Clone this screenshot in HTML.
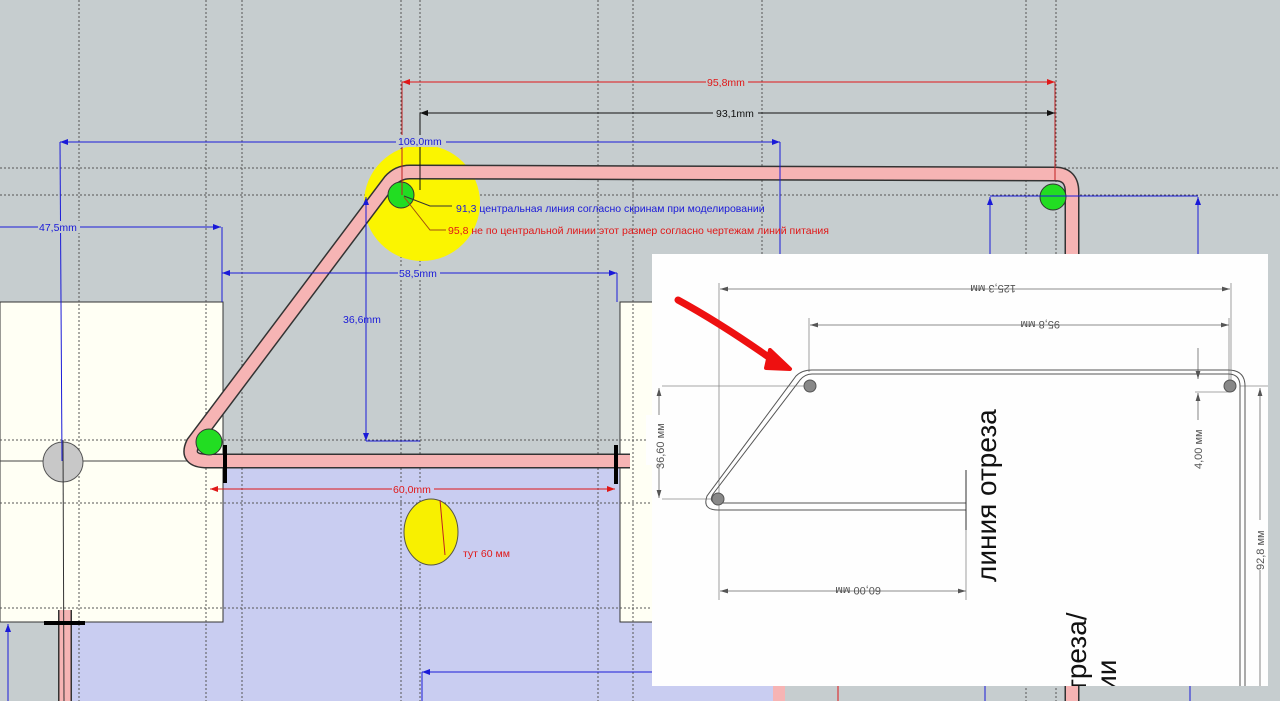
<!DOCTYPE html>
<html><head><meta charset="utf-8"><style>
html,body{margin:0;padding:0;width:1280px;height:701px;overflow:hidden;background:#c6cdcf}
svg{display:block}
text{font-family:"Liberation Sans","DejaVu Sans",sans-serif}
</style></head><body>
<svg width="1280" height="701" viewBox="0 0 1280 701" xmlns="http://www.w3.org/2000/svg">
<defs>
<marker id="ab" markerWidth="8" markerHeight="6" refX="8" refY="3" orient="auto-start-reverse"><path d="M0,0L8,3L0,6z" fill="#1a1ad8"/></marker>
<marker id="ar" markerWidth="8" markerHeight="6" refX="8" refY="3" orient="auto-start-reverse"><path d="M0,0L8,3L0,6z" fill="#e01818"/></marker>
<marker id="ak" markerWidth="8" markerHeight="6" refX="8" refY="3" orient="auto-start-reverse"><path d="M0,0L8,3L0,6z" fill="#111"/></marker>
<marker id="ag" markerWidth="10" markerHeight="6" refX="10" refY="3" orient="auto-start-reverse"><path d="M0,0L10,3L0,6z" fill="#555"/></marker>
<clipPath id="ic"><rect x="652" y="254" width="616" height="432"/></clipPath>
</defs>
<rect width="1280" height="701" fill="#c6cdcf"/>
<rect x="223" y="460" width="430" height="241" fill="#c9cdf1"/>
<rect x="72" y="622" width="160" height="79" fill="#c9cdf1"/>
<rect x="652" y="686" width="133" height="15" fill="#c9cdf1"/>
<rect x="0" y="302" width="223" height="320" fill="#fffff4" stroke="#333" stroke-width="1"/>
<rect x="620" y="302" width="40" height="320" fill="#fffff4" stroke="#333" stroke-width="1"/>
<g stroke="#555" stroke-width="1" stroke-dasharray="2,2">
<line x1="79" y1="0" x2="79" y2="701"/><line x1="206" y1="0" x2="206" y2="701"/><line x1="242" y1="0" x2="242" y2="701"/>
<line x1="401" y1="0" x2="401" y2="701"/><line x1="420" y1="0" x2="420" y2="701"/><line x1="598" y1="0" x2="598" y2="701"/>
<line x1="633" y1="0" x2="633" y2="701"/><line x1="762" y1="0" x2="762" y2="260"/><line x1="1026" y1="0" x2="1026" y2="701"/><line x1="1056" y1="0" x2="1056" y2="701"/>
<line x1="0" y1="168" x2="1280" y2="168"/><line x1="0" y1="195" x2="1280" y2="195"/><line x1="0" y1="440" x2="660" y2="440"/>
<line x1="0" y1="503" x2="660" y2="503"/><line x1="0" y1="608" x2="660" y2="608"/>
</g>
<line x1="0" y1="461" x2="200" y2="461" stroke="#444"/>
<circle cx="422" cy="203" r="58" fill="#fbf500"/>
<ellipse cx="431" cy="532" rx="27" ry="33" fill="#f8f000" stroke="#554" stroke-width="1"/>
<line x1="440" y1="500" x2="445" y2="555" stroke="#c02020" stroke-width="1"/>
<g fill="none" stroke-linejoin="round" stroke-linecap="butt">
<path d="M630,461 L205,461 Q185,460 193,443 L390,181 Q398,172 410,172 L1055,174 Q1072,174 1072,192 L1072,701" stroke="#333" stroke-width="15"/>
<path d="M630,461 L205,461 Q185,460 193,443 L390,181 Q398,172 410,172 L1055,174 Q1072,174 1072,192 L1072,701" stroke="#f6b4b4" stroke-width="12"/>
<path d="M65,610 L65,701" stroke="#333" stroke-width="14"/>
<path d="M65,610 L65,701" stroke="#f6b4b4" stroke-width="11"/>
<path d="M779,686 L779,701" stroke="#f6b4b4" stroke-width="12"/>
</g>
<circle cx="401" cy="195" r="13" fill="#22dd22" stroke="#333"/>
<circle cx="209" cy="442" r="13" fill="#22dd22" stroke="#333"/>
<circle cx="1053" cy="197" r="13" fill="#22dd22" stroke="#333"/>
<ellipse cx="63" cy="462" rx="20" ry="20" fill="#c8c8c8" stroke="#555"/>
<line x1="63" y1="440" x2="64" y2="701" stroke="#333"/>
<line x1="225" y1="445" x2="225" y2="483" stroke="#000" stroke-width="4"/>
<line x1="616" y1="445" x2="616" y2="484" stroke="#000" stroke-width="4"/>
<line x1="44" y1="623" x2="85" y2="623" stroke="#000" stroke-width="4"/>
<g stroke="#1a1ad8" stroke-width="1" fill="none">
<line x1="60" y1="142" x2="780" y2="142" marker-start="url(#ab)" marker-end="url(#ab)"/>
<line x1="60" y1="142" x2="62" y2="461"/><line x1="780" y1="142" x2="780" y2="260"/>
<line x1="0" y1="227" x2="221" y2="227" marker-end="url(#ab)"/><line x1="222" y1="227" x2="222" y2="302"/>
<line x1="222" y1="273" x2="617" y2="273" marker-start="url(#ab)" marker-end="url(#ab)"/><line x1="617" y1="273" x2="617" y2="302"/>
<line x1="366" y1="197" x2="366" y2="441" marker-start="url(#ab)" marker-end="url(#ab)"/><line x1="366" y1="441" x2="420" y2="441"/>
<line x1="990" y1="197" x2="990" y2="260" marker-start="url(#ab)"/><line x1="1198" y1="197" x2="1198" y2="260" marker-start="url(#ab)"/>
<line x1="990" y1="196" x2="1198" y2="196"/>
<line x1="8" y1="624" x2="8" y2="701" marker-start="url(#ab)"/>
<line x1="422" y1="672" x2="652" y2="672" marker-start="url(#ab)"/><line x1="422" y1="672" x2="422" y2="701"/>
<line x1="985" y1="686" x2="985" y2="701"/><line x1="1190" y1="686" x2="1190" y2="701"/>
</g>
<line x1="402" y1="82" x2="1055" y2="82" stroke="#e01818" marker-start="url(#ar)" marker-end="url(#ar)"/>
<line x1="402" y1="82" x2="402" y2="195" stroke="#c02020"/><line x1="1055" y1="82" x2="1055" y2="180" stroke="#c02020"/>
<line x1="420" y1="113" x2="1055" y2="113" stroke="#111" marker-start="url(#ak)" marker-end="url(#ak)"/>
<line x1="420" y1="113" x2="420" y2="190" stroke="#111"/>
<line x1="210" y1="489" x2="615" y2="489" stroke="#e01818" marker-start="url(#ar)" marker-end="url(#ar)"/>
<line x1="838" y1="686" x2="838" y2="701" stroke="#e01818"/>
<path d="M404,196 L430,206 L452,206" stroke="#333" fill="none"/>
<path d="M404,197 L430,230 L446,230" stroke="#a05010" fill="none"/>
<g font-size="10.5">
<rect x="396" y="135" width="50" height="12" fill="#c6cdcf"/>
<text x="398" y="145" fill="#1a1ad8">106,0mm</text>
<rect x="38" y="221" width="42" height="12" fill="#c6cdcf"/>
<text x="39" y="231" fill="#1a1ad8">47,5mm</text>
<rect x="398" y="267" width="42" height="12" fill="#c6cdcf"/>
<text x="399" y="277" fill="#1a1ad8">58,5mm</text>
<text x="343" y="323" fill="#1a1ad8">36,6mm</text>
<rect x="706" y="76" width="42" height="12" fill="#c6cdcf"/>
<text x="707" y="86" fill="#e01818">95,8mm</text>
<rect x="713" y="107" width="45" height="12" fill="#c6cdcf"/>
<text x="716" y="117" fill="#111">93,1mm</text>
<rect x="392" y="483" width="42" height="12" fill="#c9cdf1"/>
<text x="393" y="493" fill="#e01818">60,0mm</text>
<text x="456" y="212" fill="#1a1ad8">91,3  центральная линия согласно скринам при моделировании</text>
<text x="448" y="234" fill="#e01818">95,8 не по центральной линии  этот размер согласно чертежам линий питания</text>
<text x="463" y="557" fill="#e01818">тут 60 мм</text>
</g>
<rect x="652" y="254" width="616" height="432" fill="#fefefe"/>
<g stroke="#888" stroke-width="0.8" fill="none">
<line x1="719" y1="283" x2="719" y2="600"/><line x1="1231" y1="283" x2="1231" y2="380"/>
<line x1="809" y1="318" x2="809" y2="372"/><line x1="1229" y1="318" x2="1229" y2="380"/>
<line x1="662" y1="386" x2="806" y2="386"/><line x1="662" y1="499" x2="712" y2="499"/>
<line x1="966" y1="500" x2="966" y2="600"/>
<line x1="1195" y1="392" x2="1230" y2="392"/>
<line x1="1240" y1="386" x2="1268" y2="386"/>
</g>
<g stroke="#666" stroke-width="0.8">
<line x1="720" y1="289" x2="1230" y2="289" marker-start="url(#ag)" marker-end="url(#ag)"/>
<line x1="810" y1="325" x2="1229" y2="325" marker-start="url(#ag)" marker-end="url(#ag)"/>
<line x1="720" y1="591" x2="966" y2="591" marker-start="url(#ag)" marker-end="url(#ag)"/>
<line x1="659" y1="388" x2="659" y2="498" marker-start="url(#ag)" marker-end="url(#ag)"/>
<line x1="1198" y1="348" x2="1198" y2="379" marker-end="url(#ag)"/>
<line x1="1198" y1="420" x2="1198" y2="393" marker-end="url(#ag)"/>
<line x1="1260" y1="388" x2="1260" y2="686" marker-start="url(#ag)"/>
</g>
<rect x="1245" y="520" width="20" height="50" fill="#fefefe"/>
<rect x="646" y="415" width="22" height="50" fill="#fefefe"/>
<g fill="none" stroke="#555" stroke-width="1">
<path d="M966,503 L718,503 Q708,503 713,494 L800,380 Q805,374 812,374 L1228,374 Q1240,374 1240,386 L1240,686"/>
<path d="M966,510 L718,510 Q702,510 707,496 L796,376 Q802,370 812,370 L1228,370 Q1245,370 1245,386 L1245,686"/>
</g>
<line x1="966" y1="470" x2="966" y2="530" stroke="#333"/>
<circle cx="810" cy="386" r="6" fill="#888" stroke="#555"/>
<circle cx="718" cy="499" r="6" fill="#888" stroke="#555"/>
<circle cx="1230" cy="386" r="6" fill="#888" stroke="#555"/>
<g font-size="11" fill="#555">
<text transform="translate(1016,285) rotate(180)">125,3 мм</text>
<text transform="translate(1060,321) rotate(180)">95,8 мм</text>
<text transform="translate(881,587) rotate(180)">60,00 мм</text>
<text transform="translate(664,469) rotate(-90)">36,60 мм</text>
<text transform="translate(1202,469) rotate(-90)">4,00 мм</text>
<text transform="translate(1264,570) rotate(-90)">92,8 мм</text>
</g>
<g font-size="28" fill="#111" clip-path="url(#ic)">
<text transform="translate(996,582) rotate(-90)">линия отреза</text>
<text transform="translate(1086,692) rotate(-90)">треза/</text>
<text transform="translate(1116,722) rotate(-90)">ории</text>
</g>
<path d="M678,300 C700,312 730,330 770,358" stroke="#ee1010" stroke-width="7" fill="none" stroke-linecap="round"/>
<path d="M770,350 L790,369 L766,368 Z" fill="#ee1010" stroke="#ee1010" stroke-width="4" stroke-linejoin="round"/>
</svg>
</body></html>
